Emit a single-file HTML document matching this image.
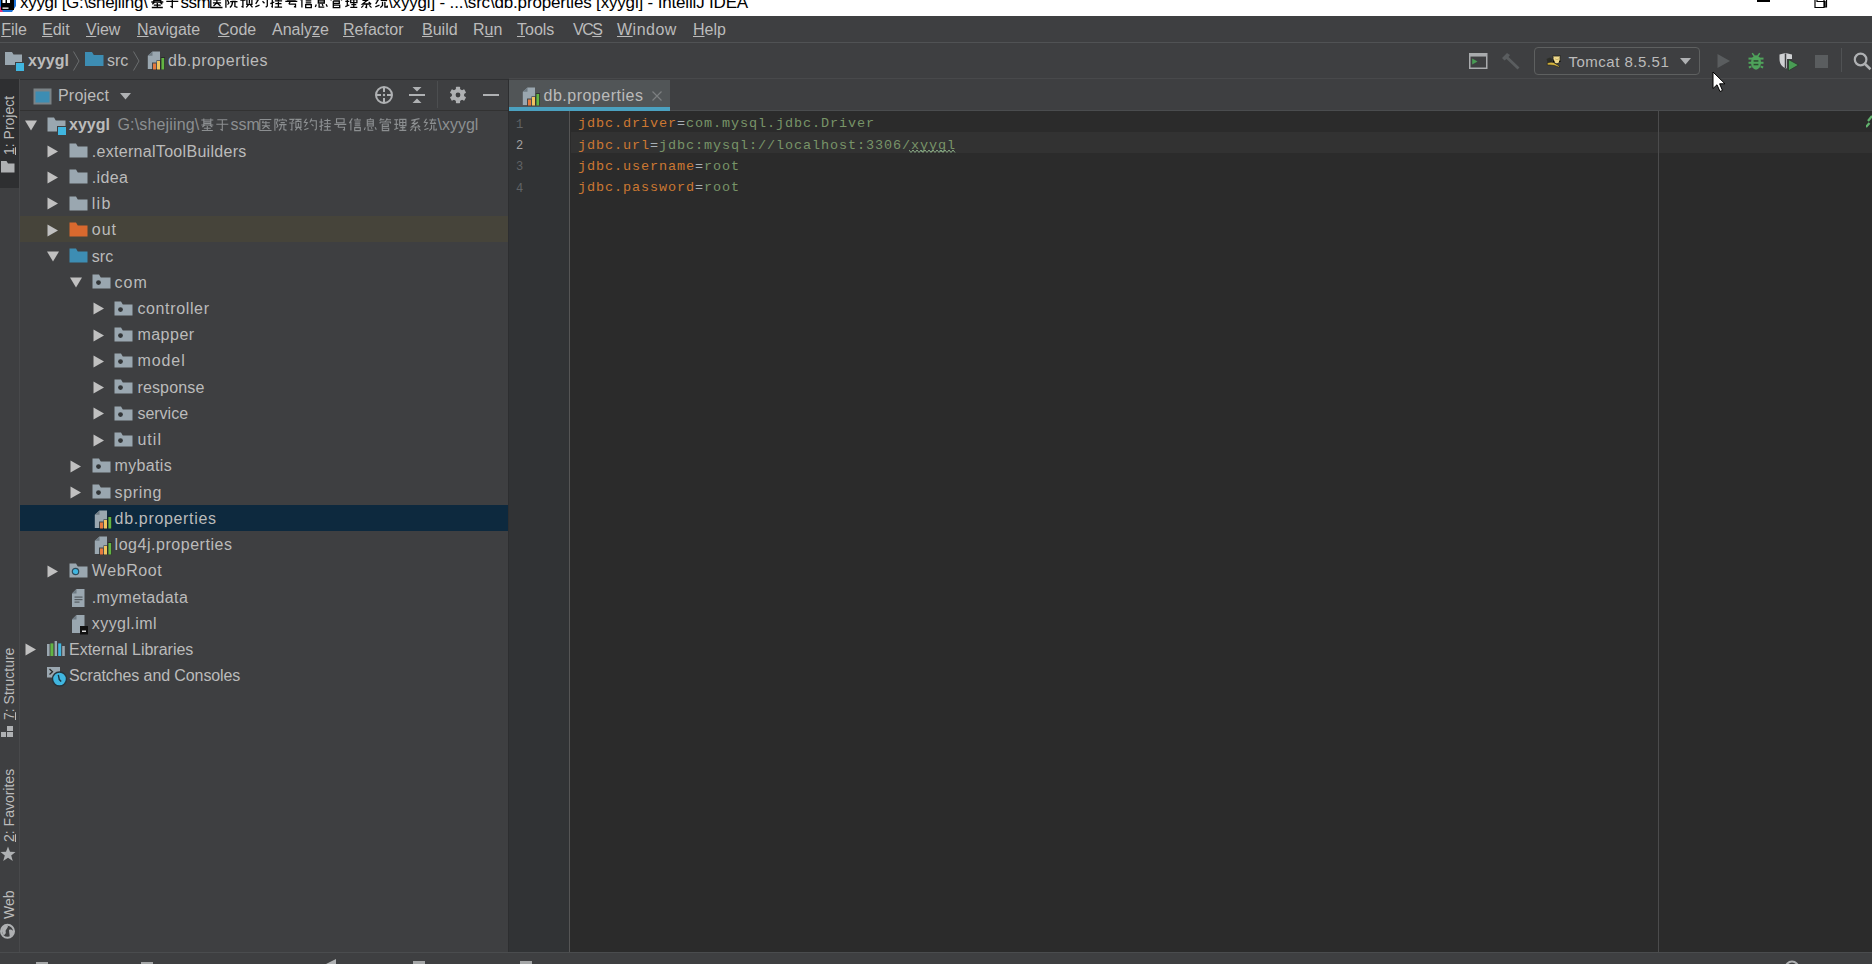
<!DOCTYPE html>
<html><head><meta charset="utf-8">
<style>
*{margin:0;padding:0;box-sizing:border-box}
html,body{width:1872px;height:964px;overflow:hidden;background:#3E3F41;font-family:"Liberation Sans",sans-serif;color:#BBBBBB;position:relative}
.a{position:absolute}
.t{position:absolute;white-space:pre;font-size:16px;line-height:20px}
.cj{display:inline-block;height:16px;vertical-align:-2px;position:relative}
.cj i{position:absolute;left:2px;top:1px;right:2px;bottom:1px;border:1.3px solid;border-left-width:1px;border-right-width:1px}
#title{left:0;top:0;width:1872px;height:16px;background:#fff;overflow:hidden}
#menu{left:0;top:16px;width:1872px;height:27px;background:#3E3F41;border-bottom:1px solid #505254}
#menu .t{top:4px;color:#BBBBBB}
#menu u{text-decoration:underline;text-underline-offset:0.5px;text-decoration-thickness:1px}
#nav{left:0;top:43px;width:1872px;height:36px;background:#3E3F41}
#strip{left:0;top:79px;width:20px;height:873px;background:#3E3F41;border-right:1px solid #48494B}
#panel{left:20px;top:79px;width:488px;height:873px;background:#3E3F41}
#phead{left:0;top:0;width:488px;height:32px;border-bottom:1px solid #323232}
#divider{left:508px;top:79px;width:1px;height:873px;background:#2D2E30}
#tabs{left:509px;top:79px;width:1363px;height:32px;background:#3E3F41;border-bottom:1px solid #4A4C4E}
#tab{left:0;top:1px;width:161px;height:31px;background:#515557}
#tabline{left:0;top:28px;width:161px;height:4px;background:#4BA1C0}
#gutter{left:509px;top:111px;width:61px;height:841px;background:#313335}
#gline{left:569px;top:111px;width:1px;height:841px;background:#555555}
#editor{left:570px;top:111px;width:1302px;height:841px;background:#2B2B2B}
#curline{left:571px;top:132px;width:1301px;height:21px;background:#323232}
#margin{left:1658px;top:111px;width:1px;height:841px;background:#4B4B4C}
#status{left:0;top:952px;width:1872px;height:12px;background:#3E3F41;border-top:1px solid #4A4C4E}
.code{position:absolute;left:578px;white-space:pre;font-family:"Liberation Mono",monospace;font-size:13.5px;letter-spacing:0.9px;line-height:21px}
.k{color:#CC7832}.v{color:#789468}.e{color:#A9B0B6}
.ln{position:absolute;left:516px;width:10px;white-space:pre;font-family:"Liberation Mono",monospace;font-size:12px;line-height:21px;color:#606366}
.vt{position:absolute;white-space:pre;font-size:14px;line-height:16px;transform-origin:0 0;transform:rotate(-90deg);color:#BBBBBB}
.vt u{text-decoration:underline;text-underline-offset:1px;text-decoration-thickness:1px}

</style></head><body>
<div id="title" class="a"><svg class="a" style="left:0;top:0" width="16" height="12" viewBox="0 0 16 12"><path d="M0 0 H16 V6 L12 12 H2 L0 9 Z" fill="#1E73D8"/><path d="M0 6 L3 12 H0Z" fill="#E8317A"/><rect x="1" y="0" width="13" height="10" fill="#000"/><rect x="2.5" y="7.5" width="6" height="1.3" fill="#fff"/><rect x="2.5" y="0" width="3" height="3" fill="#fff"/><rect x="7" y="0" width="3" height="3" fill="#fff"/></svg><span class="t" style="left:20px;top:-7.5px;font-size:17px;color:#000;letter-spacing:-0.3px">xyygl [G:\shejiing\</span><svg class="a" style="left:150px;top:-5px" width="30" height="14" viewBox="0 0 30 14"><path transform="translate(0.3 0)" d="M3.5 0.5V7 M10.5 0.5V7 M1 2H13 M3.5 3.7H10.5 M3.5 5.4H10.5 M1 7H13 M4.5 7L2 9.2 M9.5 7L12 9.2 M7 8V12.5 M3.5 10.2H10.5 M1.5 12.5H12.5" stroke="#000" stroke-width="1.3" fill="none"/><path transform="translate(15.3 0)" d="M2 1.8H12 M1 6.3H13 M7 1.8V12.3L5.2 11.3" stroke="#000" stroke-width="1.3" fill="none"/></svg><span class="t" style="left:180.5px;top:-7.5px;font-size:17px;color:#000;letter-spacing:-0.5px">ssm</span><svg class="a" style="left:209px;top:-5px" width="180" height="14" viewBox="0 0 180 14"><path transform="translate(0.3 0)" d="M1.5 1.5H13 M1.5 1.5V12.5H13.2 M5 2.8L4 5 M4 4.8H11.5 M7.6 3V7.8 M3.6 7.8H11.8 M7.6 7.8L4.2 11 M7.6 7.8L11.2 11" stroke="#000" stroke-width="1.3" fill="none"/><path transform="translate(15.3 0)" d="M1.6 0.8V12.8 M1.6 1.3H4.4L3.2 5L4.6 8.2L3.2 9.6 M9.3 0.4V2 M5.8 2H13 M5.8 2V3.6 M13 2V3.6 M7.3 4.6H11.5 M5.8 6.6H13.2 M8.3 6.6C8.1 9.5 7 11.5 5.6 12.5 M10.6 6.6V11.6L13.2 12.4" stroke="#000" stroke-width="1.3" fill="none"/><path transform="translate(30.3 0)" d="M1 1.4H5.6L3.6 3.8 M1 5H6.2 M3.6 5V12L2.2 11.4 M7 1.4H13.2 M10.2 1.4L9.3 3.4 M7.6 3.4H12.6V9.4H7.6Z M10.1 5V8.6 M9.2 9.6L7 12.4 M11 9.6L13.2 12.4" stroke="#000" stroke-width="1.3" fill="none"/><path transform="translate(45.3 0)" d="M3.2 0.8L1 4.4L4 4.8L1.4 8.8 M1 11.8L5.2 10.2 M8.4 0.6L6.6 4.6 M7.4 2.8H13V11L11.4 12.2 M8.2 6.2L10.2 8.2" stroke="#000" stroke-width="1.3" fill="none"/><path transform="translate(60.3 0)" d="M1 4H5 M3 0.8V12L2 11.5 M1 8.6L5 7 M6 2.5H12.2 M9.1 0.8V5.8 M5.6 5.8H12.8 M6 8.6H12.2 M9.1 6.8V12.2 M5.4 12.2H12.8" stroke="#000" stroke-width="1.3" fill="none"/><path transform="translate(75.3 0)" d="M3.2 0.8H10.8V4.8H3.2Z M1 6.4H13 M5.8 6.4L4.6 9.2 M4.6 9.2H11.2V12L9.6 11.6" stroke="#000" stroke-width="1.3" fill="none"/><path transform="translate(90.3 0)" d="M4 0.4L1 5.2 M2.6 3.4V12.6 M8.6 0.4L9.4 1.4 M5.8 2H12.6 M6.4 4H12 M6.4 5.9H12 M6.4 7.8H12 M6.4 9.6H12V12.6H6.4Z" stroke="#000" stroke-width="1.3" fill="none"/><path transform="translate(105.3 0)" d="M7.4 0.4L6.4 1.8 M4 1.8H10V8H4Z M4 3.8H10 M4 5.9H10 M2 9.4L1 12 M4.8 9V12.2H10 M7.8 9.2L8.8 10.8 M11.8 9.2L13 11.8" stroke="#000" stroke-width="1.3" fill="none"/><path transform="translate(120.3 0)" d="M3 0.4L1.4 2.8 M2.4 1.8H6 M9 0.4L7.6 2.8 M8.4 1.8H12.6 M7 2.8V4 M1.8 4H12.2V5.6 M1.8 4V5.6 M4 6H10V8.4H4 M4 6V12.6H10.4V10.2H4" stroke="#000" stroke-width="1.3" fill="none"/><path transform="translate(135.3 0)" d="M1 1.8H5 M1 6.4H5 M3 1.8V11 M1 11.6L5 10 M6.4 1.4H12.6V7.6H6.4Z M6.4 4.5H12.6 M9.5 1.4V12.2 M7 9.6H12 M6 12.4H13" stroke="#000" stroke-width="1.3" fill="none"/><path transform="translate(150.3 0)" d="M11.2 0.6L3 2.4 M7.2 2.4L4.2 5.4H9 M9.6 4L3.2 9H11.6 M9.4 7L11.8 9.2 M7.2 9V12.6L5.8 12 M4.2 10.4L2 12.6 M10 10.4L12.2 12.6" stroke="#000" stroke-width="1.3" fill="none"/><path transform="translate(165.3 0)" d="M3.2 0.8L1 4.4L4 4.8L1.4 8.8 M1 11.8L5.2 10.2 M9.2 0.4V2 M6 2H13 M9 2L7.2 5.4H12.2 M11 3.8L12.6 6 M8.2 6.8V10.4L6 12.6 M10.6 6.8V12H13V10.4" stroke="#000" stroke-width="1.3" fill="none"/></svg><span class="t" style="left:388px;top:-7.5px;font-size:17px;color:#000;letter-spacing:-0.17px">\xyygl] - ...\src\db.properties [xyygl] - IntelliJ IDEA</span><div class="a" style="left:1757px;top:0;width:13px;height:2px;background:#000"></div><svg class="a" style="left:1814px;top:0" width="14" height="8" viewBox="0 0 14 8"><path d="M3 0 V1.5 H11 V7 H12.5 V0 M1 0 V7.5 H10 V0" stroke="#000" stroke-width="1.2" fill="none"/></svg></div>
<div id="menu" class="a">
<span class="t" style="left:1.2px"><u>F</u>ile</span>
<span class="t" style="left:42px"><u>E</u>dit</span>
<span class="t" style="left:86px"><u>V</u>iew</span>
<span class="t" style="left:137px"><u>N</u>avigate</span>
<span class="t" style="left:218px"><u>C</u>ode</span>
<span class="t" style="left:272px">Analy<u>z</u>e</span>
<span class="t" style="left:343px"><u>R</u>efactor</span>
<span class="t" style="left:422px"><u>B</u>uild</span>
<span class="t" style="left:473px">R<u>u</u>n</span>
<span class="t" style="left:517px"><u>T</u>ools</span>
<span class="t" style="left:573px;letter-spacing:-1.5px">VC<u>S</u></span>
<span class="t" style="left:617px;letter-spacing:0.5px"><u>W</u>indow</span>
<span class="t" style="left:693px"><u>H</u>elp</span>
</div>

<div id="nav" class="a"></div>
<svg class="a" style="left:5px;top:52px" width="20" height="19" viewBox="0 0 20 19"><path d="M0 0 H7 L8.5 2.5 H17 V13 H0 Z" fill="#9AA7B0"/><rect x="10" y="10" width="10" height="9" fill="#3E3F41"/><rect x="11" y="11" width="8" height="8" fill="#40B6E0"/></svg>
<span class="t" style="left:28px;top:51px;font-weight:700">xyygl</span>
<svg class="a" style="left:73px;top:51px" width="7" height="20" viewBox="0 0 7 20"><path d="M0.5 0.5 L6 10 L0.5 19.5" stroke="#6B6E70" stroke-width="1" fill="none"/></svg>
<svg class="a" style="left:85px;top:52px" width="19" height="14" viewBox="0 0 19 14"><path d="M0 0 H7 L8.8 3 H18.5 V14 H0 Z" fill="#3D8DB3"/></svg>
<span class="t" style="left:107px;top:51px">src</span>
<svg class="a" style="left:133px;top:51px" width="7" height="20" viewBox="0 0 7 20"><path d="M0.5 0.5 L6 10 L0.5 19.5" stroke="#6B6E70" stroke-width="1" fill="none"/></svg>
<svg class="a" style="left:147px;top:51px" width="18" height="19" viewBox="0 0 18 19"><path d="M5.5 0.5 H13 V18 H0.8 V4.8 Z" fill="#9AA7B0"/><path d="M0.8 4.8 L5.5 0.5 V4.8 Z" fill="#6E7A82"/><rect x="5" y="11.5" width="4.6" height="7" fill="#1E1E1E" opacity="0.7"/><rect x="6" y="12.5" width="3" height="6" fill="#E5793E"/><rect x="9.5" y="9.3" width="4.2" height="9.2" fill="#1E1E1E" opacity="0.7"/><rect x="10" y="10" width="3" height="8.5" fill="#F1C35F"/><rect x="13.8" y="6.2" width="4.2" height="12.3" fill="#1E1E1E" opacity="0.7"/><rect x="14.4" y="7" width="2.8" height="11.5" fill="#62B543"/></svg>
<span class="t" style="left:168px;top:51px;letter-spacing:0.5px">db.properties</span>
<!-- toolbar right -->
<svg class="a" style="left:1469px;top:53px" width="19" height="16" viewBox="0 0 19 16"><rect x="0.75" y="0.75" width="17" height="14.5" fill="none" stroke="#A9ABAD" stroke-width="1.5"/><rect x="0.75" y="0.75" width="17" height="2.8" fill="#A9ABAD"/><path d="M3.2 5.5 L8.5 8.5 L3.2 11.5 Z" fill="#499C54"/></svg>
<svg class="a" style="left:1501px;top:52px" width="20" height="18" viewBox="0 0 20 18"><path d="M1 6 L6 1 L9 3 L7.5 5 L18.5 15.5 L16.5 17.5 L5.5 7 L3.5 8.5 Z" fill="#5A5D5F"/></svg>
<div class="a" style="left:1534px;top:47px;width:166px;height:28px;border:1.5px solid #5E6060;border-radius:4px"></div>
<svg class="a" style="left:1545px;top:54px" width="17" height="14" viewBox="0 0 17 14"><path d="M1.5 5 L5 3.5 L8 5.5 L6 9 L3 10 Z" fill="#2A2B24" opacity="0.85"/><path d="M2 9.5 C4 8 6 8 8.5 8.5 L12 10.5 L15 12.8 L13.5 13 L9.5 11.5 L5 11 L2.5 11 Z" fill="#D6B43C" stroke="#1E1E18" stroke-width="0.6"/><path d="M8.2 1.2 L9.2 2 L14 2 L15 1.2 L15.2 6.5 L13.5 9.5 L11 9.8 L8.8 8 L8 4.5 Z" fill="#EFD98C" stroke="#1E1E18" stroke-width="0.8"/><circle cx="8.7" cy="7.3" r="0.9" fill="#000"/><circle cx="14.8" cy="7.3" r="0.8" fill="#000"/><path d="M10.5 5 L11.5 5.5 M12.5 5.5 L13.5 5" stroke="#8A7A3A" stroke-width="0.7"/></svg>
<span class="t" style="left:1568.5px;top:52px;font-size:15px;letter-spacing:0.5px">Tomcat 8.5.51</span>
<svg class="a" style="left:1680px;top:58px" width="12" height="7" viewBox="0 0 12 7"><path d="M0 0 H11 L5.5 6.5 Z" fill="#AFB1B3"/></svg>
<svg class="a" style="left:1717px;top:54px" width="14" height="14" viewBox="0 0 14 14"><path d="M0.5 0 L13 7 L0.5 14 Z" fill="#5A5D5F"/></svg>
<svg class="a" style="left:1748px;top:52px" width="16" height="19" viewBox="0 0 16 19"><g fill="#4FA35B"><ellipse cx="8" cy="10.5" rx="5" ry="7.2"/><rect x="0.5" y="5.6" width="15" height="2"/><rect x="0.5" y="9.8" width="15" height="2"/><path d="M0.5 14.5 L3.5 13.5 L3.5 15.5 L1.2 16.4 Z M15.5 14.5 L12.5 13.5 L12.5 15.5 L14.8 16.4 Z"/><path d="M3.6 1.6 L4.8 0.8 L7 3.6 L5.6 4.4 Z M12.4 1.6 L11.2 0.8 L9 3.6 L10.4 4.4 Z"/></g><rect x="5.6" y="8.2" width="4.8" height="1.5" fill="#2C4A30"/><rect x="5.6" y="11.8" width="4.8" height="1.5" fill="#2C4A30"/></svg>
<svg class="a" style="left:1779px;top:53px" width="20" height="18" viewBox="0 0 20 18"><path d="M0.5 1.5 L6.5 0 L13 1.5 V6 L8 6 V15 L7 15.5 C3 13.5 0.5 11 0.5 6 Z" fill="#CFD1D3"/><path d="M6.5 0.5 V15" stroke="#3E3F41" stroke-width="1.5"/><path d="M9.5 6.5 L19.5 12 L9.5 17.8 Z" fill="#499C54" stroke="#2B3A2D" stroke-width="0.8"/></svg>
<div class="a" style="left:1815px;top:55px;width:12.5px;height:12.5px;background:#5A5D5F"></div>
<div class="a" style="left:1841px;top:48px;width:1px;height:24px;background:#505254"></div>
<svg class="a" style="left:1852px;top:51px" width="20" height="20" viewBox="0 0 20 20"><circle cx="8.6" cy="8.5" r="5.8" stroke="#AFB1B3" stroke-width="2.2" fill="none"/><path d="M12.8 12.8 L18.5 18.2" stroke="#AFB1B3" stroke-width="2.6"/></svg>

<div id="strip" class="a"></div>
<div class="a" style="left:0;top:79px;width:19px;height:109px;background:#2E2F31"></div>
<span class="vt" style="left:1px;top:155px"><u>1</u>: Project</span>
<svg class="a" style="left:1px;top:161px" width="14" height="12" viewBox="0 0 14 12"><path d="M0 0 H5.5 L7 2.5 H13.5 V11.5 H0 Z" fill="#AFB1B3"/></svg>
<span class="vt" style="left:1px;top:720px"><u>7</u>: Structure</span>
<svg class="a" style="left:1px;top:726px" width="13" height="12" viewBox="0 0 13 12"><rect x="6" y="0" width="6" height="5" fill="#AFB1B3"/><rect x="0" y="6" width="5" height="5" fill="#AFB1B3"/><rect x="6" y="6" width="6" height="5" fill="#AFB1B3"/></svg>
<span class="vt" style="left:1px;top:842px"><u>2</u>: Favorites</span>
<svg class="a" style="left:0px;top:846px" width="16" height="16" viewBox="0 0 16 16"><path d="M8 0.5 L10 5.8 L15.5 6 L11.2 9.5 L12.8 15 L8 11.8 L3.2 15 L4.8 9.5 L0.5 6 L6 5.8 Z" fill="#AFB1B3"/></svg>
<span class="vt" style="left:0.5px;top:919px">Web</span>
<svg class="a" style="left:0px;top:923px" width="16" height="17" viewBox="0 0 16 17"><circle cx="7.5" cy="8.3" r="6.5" stroke="#AFB1B3" stroke-width="2" fill="none"/><path d="M2.5 5 C4 3 6 2.5 8 3 C8 5 6 6 5.5 8 C6.5 10 5 12 3.5 12 C2 10 1.5 7 2.5 5 Z M9 7 C11 6 13 7 13.5 9 C13 12 11 13.5 9.5 14 C10 12 9 10 9 7 Z" fill="#AFB1B3"/></svg>

<div id="panel" class="a"><div id="phead" class="a"></div></div>
<svg class="a" style="left:33px;top:88px" width="19" height="17" viewBox="0 0 19 17"><rect x="0.5" y="0.5" width="18" height="16" fill="#7B8387"/><rect x="2.5" y="3.5" width="14" height="11" fill="#3D8DB3"/></svg>
<span class="t" style="left:58px;top:86px;font-size:16px;letter-spacing:0.2px">Project</span>
<svg class="a" style="left:120px;top:93px" width="12" height="7" viewBox="0 0 12 7"><path d="M0 0 H11 L5.5 6.5 Z" fill="#AFB1B3"/></svg>
<svg class="a" style="left:374px;top:85px" width="20" height="20" viewBox="0 0 20 20"><circle cx="10" cy="10" r="8" stroke="#AFB1B3" stroke-width="2" fill="none"/><path d="M10 2 V7 M10 13 V18 M2 10 H7 M13 10 H18" stroke="#AFB1B3" stroke-width="2"/><circle cx="10" cy="10" r="1.2" fill="#AFB1B3"/></svg>
<svg class="a" style="left:409px;top:86px" width="16" height="18" viewBox="0 0 16 18"><path d="M3.5 1 H12.5 L8 5.5 Z M3.5 17 H12.5 L8 12.5 Z" fill="#AFB1B3"/><rect x="0" y="8" width="16" height="2" fill="#AFB1B3"/></svg>
<div class="a" style="left:437px;top:81px;width:1px;height:27px;background:#4C4E50"></div>
<svg class="a" style="left:449px;top:86px" width="18" height="18" viewBox="0 0 18 18"><circle cx="9" cy="9" r="6.2" fill="#AFB1B3"/><g fill="#AFB1B3"><rect x="6.9" y="0.8" width="4.2" height="4.5" rx="0.6" transform="rotate(0 9 9)"/><rect x="6.9" y="0.8" width="4.2" height="4.5" rx="0.6" transform="rotate(60 9 9)"/><rect x="6.9" y="0.8" width="4.2" height="4.5" rx="0.6" transform="rotate(120 9 9)"/><rect x="6.9" y="0.8" width="4.2" height="4.5" rx="0.6" transform="rotate(180 9 9)"/><rect x="6.9" y="0.8" width="4.2" height="4.5" rx="0.6" transform="rotate(240 9 9)"/><rect x="6.9" y="0.8" width="4.2" height="4.5" rx="0.6" transform="rotate(300 9 9)"/></g><circle cx="9" cy="9" r="2.4" fill="#3E3F41"/></svg>
<div class="a" style="left:483px;top:94px;width:16px;height:2px;background:#AFB1B3"></div>

<svg class="a" style="left:24.5px;top:119.5px" width="12" height="11" viewBox="0 0 12 11"><path d="M0 0.5 H12 L6 10.5 Z" fill="#C0C0C0"/></svg>
<svg class="a" style="left:47.0px;top:116.9px" width="19" height="15" viewBox="0 0 19 15"><path d="M0.5 0.5 H7 L8.8 3.5 H18.5 V14.5 H0.5 Z" fill="#9AA7B0"/></svg><div class="a" style="left:56.8px;top:126.4px;width:10.2px;height:10px;background:#3E3F41"></div><div class="a" style="left:57.8px;top:127.4px;width:8.3px;height:8px;background:#40B6E0"></div>
<span class="t" style="left:69.0px;top:115.30px;font-weight:700;letter-spacing:0px">xyygl</span>
<span class="t" style="left:117.5px;top:115.30px;color:#8C8F91;letter-spacing:0.15px">G:\shejiing\</span>
<svg class="a" style="left:200px;top:118.30px" width="30" height="14" viewBox="0 0 30 14"><path transform="translate(0.3 0)" d="M3.5 0.5V7 M10.5 0.5V7 M1 2H13 M3.5 3.7H10.5 M3.5 5.4H10.5 M1 7H13 M4.5 7L2 9.2 M9.5 7L12 9.2 M7 8V12.5 M3.5 10.2H10.5 M1.5 12.5H12.5" stroke="#8C8F91" stroke-width="1.1" fill="none"/><path transform="translate(15.3 0)" d="M2 1.8H12 M1 6.3H13 M7 1.8V12.3L5.2 11.3" stroke="#8C8F91" stroke-width="1.1" fill="none"/></svg>
<span class="t" style="left:230.5px;top:115.30px;color:#8C8F91">ssm</span>
<svg class="a" style="left:258px;top:118.30px" width="180" height="14" viewBox="0 0 180 14"><path transform="translate(0.3 0)" d="M1.5 1.5H13 M1.5 1.5V12.5H13.2 M5 2.8L4 5 M4 4.8H11.5 M7.6 3V7.8 M3.6 7.8H11.8 M7.6 7.8L4.2 11 M7.6 7.8L11.2 11" stroke="#8C8F91" stroke-width="1.1" fill="none"/><path transform="translate(15.3 0)" d="M1.6 0.8V12.8 M1.6 1.3H4.4L3.2 5L4.6 8.2L3.2 9.6 M9.3 0.4V2 M5.8 2H13 M5.8 2V3.6 M13 2V3.6 M7.3 4.6H11.5 M5.8 6.6H13.2 M8.3 6.6C8.1 9.5 7 11.5 5.6 12.5 M10.6 6.6V11.6L13.2 12.4" stroke="#8C8F91" stroke-width="1.1" fill="none"/><path transform="translate(30.3 0)" d="M1 1.4H5.6L3.6 3.8 M1 5H6.2 M3.6 5V12L2.2 11.4 M7 1.4H13.2 M10.2 1.4L9.3 3.4 M7.6 3.4H12.6V9.4H7.6Z M10.1 5V8.6 M9.2 9.6L7 12.4 M11 9.6L13.2 12.4" stroke="#8C8F91" stroke-width="1.1" fill="none"/><path transform="translate(45.3 0)" d="M3.2 0.8L1 4.4L4 4.8L1.4 8.8 M1 11.8L5.2 10.2 M8.4 0.6L6.6 4.6 M7.4 2.8H13V11L11.4 12.2 M8.2 6.2L10.2 8.2" stroke="#8C8F91" stroke-width="1.1" fill="none"/><path transform="translate(60.3 0)" d="M1 4H5 M3 0.8V12L2 11.5 M1 8.6L5 7 M6 2.5H12.2 M9.1 0.8V5.8 M5.6 5.8H12.8 M6 8.6H12.2 M9.1 6.8V12.2 M5.4 12.2H12.8" stroke="#8C8F91" stroke-width="1.1" fill="none"/><path transform="translate(75.3 0)" d="M3.2 0.8H10.8V4.8H3.2Z M1 6.4H13 M5.8 6.4L4.6 9.2 M4.6 9.2H11.2V12L9.6 11.6" stroke="#8C8F91" stroke-width="1.1" fill="none"/><path transform="translate(90.3 0)" d="M4 0.4L1 5.2 M2.6 3.4V12.6 M8.6 0.4L9.4 1.4 M5.8 2H12.6 M6.4 4H12 M6.4 5.9H12 M6.4 7.8H12 M6.4 9.6H12V12.6H6.4Z" stroke="#8C8F91" stroke-width="1.1" fill="none"/><path transform="translate(105.3 0)" d="M7.4 0.4L6.4 1.8 M4 1.8H10V8H4Z M4 3.8H10 M4 5.9H10 M2 9.4L1 12 M4.8 9V12.2H10 M7.8 9.2L8.8 10.8 M11.8 9.2L13 11.8" stroke="#8C8F91" stroke-width="1.1" fill="none"/><path transform="translate(120.3 0)" d="M3 0.4L1.4 2.8 M2.4 1.8H6 M9 0.4L7.6 2.8 M8.4 1.8H12.6 M7 2.8V4 M1.8 4H12.2V5.6 M1.8 4V5.6 M4 6H10V8.4H4 M4 6V12.6H10.4V10.2H4" stroke="#8C8F91" stroke-width="1.1" fill="none"/><path transform="translate(135.3 0)" d="M1 1.8H5 M1 6.4H5 M3 1.8V11 M1 11.6L5 10 M6.4 1.4H12.6V7.6H6.4Z M6.4 4.5H12.6 M9.5 1.4V12.2 M7 9.6H12 M6 12.4H13" stroke="#8C8F91" stroke-width="1.1" fill="none"/><path transform="translate(150.3 0)" d="M11.2 0.6L3 2.4 M7.2 2.4L4.2 5.4H9 M9.6 4L3.2 9H11.6 M9.4 7L11.8 9.2 M7.2 9V12.6L5.8 12 M4.2 10.4L2 12.6 M10 10.4L12.2 12.6" stroke="#8C8F91" stroke-width="1.1" fill="none"/><path transform="translate(165.3 0)" d="M3.2 0.8L1 4.4L4 4.8L1.4 8.8 M1 11.8L5.2 10.2 M9.2 0.4V2 M6 2H13 M9 2L7.2 5.4H12.2 M11 3.8L12.6 6 M8.2 6.8V10.4L6 12.6 M10.6 6.8V12H13V10.4" stroke="#8C8F91" stroke-width="1.1" fill="none"/></svg>
<span class="t" style="left:437.5px;top:115.30px;color:#8C8F91">\xyygl</span>
<svg class="a" style="left:47.3px;top:144.8px" width="12" height="13" viewBox="0 0 12 13"><path d="M0.5 0.5 L11 6.5 L0.5 12.5 Z" fill="#C0C0C0"/></svg>
<svg class="a" style="left:69.3px;top:143.1px" width="19" height="15" viewBox="0 0 19 15"><path d="M0.5 0.5 H7 L8.8 3.5 H18.5 V14.5 H0.5 Z" fill="#9AA7B0"/></svg>
<span class="t" style="left:91.8px;top:141.54px;font-weight:400;letter-spacing:0.3px">.externalToolBuilders</span>
<svg class="a" style="left:47.3px;top:171.1px" width="12" height="13" viewBox="0 0 12 13"><path d="M0.5 0.5 L11 6.5 L0.5 12.5 Z" fill="#C0C0C0"/></svg>
<svg class="a" style="left:69.3px;top:169.4px" width="19" height="15" viewBox="0 0 19 15"><path d="M0.5 0.5 H7 L8.8 3.5 H18.5 V14.5 H0.5 Z" fill="#9AA7B0"/></svg>
<span class="t" style="left:91.8px;top:167.78px;font-weight:400;letter-spacing:0.38px">.idea</span>
<svg class="a" style="left:47.3px;top:197.3px" width="12" height="13" viewBox="0 0 12 13"><path d="M0.5 0.5 L11 6.5 L0.5 12.5 Z" fill="#C0C0C0"/></svg>
<svg class="a" style="left:69.3px;top:195.6px" width="19" height="15" viewBox="0 0 19 15"><path d="M0.5 0.5 H7 L8.8 3.5 H18.5 V14.5 H0.5 Z" fill="#9AA7B0"/></svg>
<span class="t" style="left:91.8px;top:194.02px;font-weight:400;letter-spacing:1.25px">lib</span>
<div class="a" style="left:20px;top:215.96px;width:488px;height:26.24px;background:#46443A"></div>
<svg class="a" style="left:47.3px;top:223.6px" width="12" height="13" viewBox="0 0 12 13"><path d="M0.5 0.5 L11 6.5 L0.5 12.5 Z" fill="#C0C0C0"/></svg>
<svg class="a" style="left:69.3px;top:221.9px" width="19" height="15" viewBox="0 0 19 15"><path d="M0.5 0.5 H7 L8.8 3.5 H18.5 V14.5 H0.5 Z" fill="#D9692E"/></svg>
<span class="t" style="left:91.8px;top:220.26px;font-weight:400;letter-spacing:1.0px">out</span>
<svg class="a" style="left:47.3px;top:250.7px" width="12" height="11" viewBox="0 0 12 11"><path d="M0 0.5 H12 L6 10.5 Z" fill="#C0C0C0"/></svg>
<svg class="a" style="left:69.3px;top:248.1px" width="19" height="15" viewBox="0 0 19 15"><path d="M0.5 0.5 H7 L8.8 3.5 H18.5 V14.5 H0.5 Z" fill="#3D8DB3"/></svg>
<span class="t" style="left:91.8px;top:246.50px;font-weight:400;letter-spacing:0.0px">src</span>
<svg class="a" style="left:70.1px;top:276.9px" width="12" height="11" viewBox="0 0 12 11"><path d="M0 0.5 H12 L6 10.5 Z" fill="#C0C0C0"/></svg>
<svg class="a" style="left:91.7px;top:274.3px" width="19" height="15" viewBox="0 0 19 15"><path d="M0.5 0.5 H7 L8.8 3.5 H18.5 V14.5 H0.5 Z" fill="#9AA7B0"/><circle cx="6.5" cy="8.6" r="2.4" fill="#323537"/></svg>
<span class="t" style="left:114.6px;top:272.74px;font-weight:400;letter-spacing:1.0px">com</span>
<svg class="a" style="left:92.9px;top:302.3px" width="12" height="13" viewBox="0 0 12 13"><path d="M0.5 0.5 L11 6.5 L0.5 12.5 Z" fill="#C0C0C0"/></svg>
<svg class="a" style="left:114.1px;top:300.6px" width="19" height="15" viewBox="0 0 19 15"><path d="M0.5 0.5 H7 L8.8 3.5 H18.5 V14.5 H0.5 Z" fill="#9AA7B0"/><circle cx="6.5" cy="8.6" r="2.4" fill="#323537"/></svg>
<span class="t" style="left:137.4px;top:298.98px;font-weight:400;letter-spacing:0.64px">controller</span>
<svg class="a" style="left:92.9px;top:328.5px" width="12" height="13" viewBox="0 0 12 13"><path d="M0.5 0.5 L11 6.5 L0.5 12.5 Z" fill="#C0C0C0"/></svg>
<svg class="a" style="left:114.1px;top:326.8px" width="19" height="15" viewBox="0 0 19 15"><path d="M0.5 0.5 H7 L8.8 3.5 H18.5 V14.5 H0.5 Z" fill="#9AA7B0"/><circle cx="6.5" cy="8.6" r="2.4" fill="#323537"/></svg>
<span class="t" style="left:137.4px;top:325.22px;font-weight:400;letter-spacing:0.5px">mapper</span>
<svg class="a" style="left:92.9px;top:354.8px" width="12" height="13" viewBox="0 0 12 13"><path d="M0.5 0.5 L11 6.5 L0.5 12.5 Z" fill="#C0C0C0"/></svg>
<svg class="a" style="left:114.1px;top:353.1px" width="19" height="15" viewBox="0 0 19 15"><path d="M0.5 0.5 H7 L8.8 3.5 H18.5 V14.5 H0.5 Z" fill="#9AA7B0"/><circle cx="6.5" cy="8.6" r="2.4" fill="#323537"/></svg>
<span class="t" style="left:137.4px;top:351.46px;font-weight:400;letter-spacing:0.95px">model</span>
<svg class="a" style="left:92.9px;top:381.0px" width="12" height="13" viewBox="0 0 12 13"><path d="M0.5 0.5 L11 6.5 L0.5 12.5 Z" fill="#C0C0C0"/></svg>
<svg class="a" style="left:114.1px;top:379.3px" width="19" height="15" viewBox="0 0 19 15"><path d="M0.5 0.5 H7 L8.8 3.5 H18.5 V14.5 H0.5 Z" fill="#9AA7B0"/><circle cx="6.5" cy="8.6" r="2.4" fill="#323537"/></svg>
<span class="t" style="left:137.4px;top:377.70px;font-weight:400;letter-spacing:0.16px">response</span>
<svg class="a" style="left:92.9px;top:407.2px" width="12" height="13" viewBox="0 0 12 13"><path d="M0.5 0.5 L11 6.5 L0.5 12.5 Z" fill="#C0C0C0"/></svg>
<svg class="a" style="left:114.1px;top:405.5px" width="19" height="15" viewBox="0 0 19 15"><path d="M0.5 0.5 H7 L8.8 3.5 H18.5 V14.5 H0.5 Z" fill="#9AA7B0"/><circle cx="6.5" cy="8.6" r="2.4" fill="#323537"/></svg>
<span class="t" style="left:137.4px;top:403.94px;font-weight:400;letter-spacing:0.0px">service</span>
<svg class="a" style="left:92.9px;top:433.5px" width="12" height="13" viewBox="0 0 12 13"><path d="M0.5 0.5 L11 6.5 L0.5 12.5 Z" fill="#C0C0C0"/></svg>
<svg class="a" style="left:114.1px;top:431.8px" width="19" height="15" viewBox="0 0 19 15"><path d="M0.5 0.5 H7 L8.8 3.5 H18.5 V14.5 H0.5 Z" fill="#9AA7B0"/><circle cx="6.5" cy="8.6" r="2.4" fill="#323537"/></svg>
<span class="t" style="left:137.4px;top:430.18px;font-weight:400;letter-spacing:1.07px">util</span>
<svg class="a" style="left:70.1px;top:459.7px" width="12" height="13" viewBox="0 0 12 13"><path d="M0.5 0.5 L11 6.5 L0.5 12.5 Z" fill="#C0C0C0"/></svg>
<svg class="a" style="left:91.7px;top:458.0px" width="19" height="15" viewBox="0 0 19 15"><path d="M0.5 0.5 H7 L8.8 3.5 H18.5 V14.5 H0.5 Z" fill="#9AA7B0"/><circle cx="6.5" cy="8.6" r="2.4" fill="#323537"/></svg>
<span class="t" style="left:114.6px;top:456.42px;font-weight:400;letter-spacing:0.32px">mybatis</span>
<svg class="a" style="left:70.1px;top:486.0px" width="12" height="13" viewBox="0 0 12 13"><path d="M0.5 0.5 L11 6.5 L0.5 12.5 Z" fill="#C0C0C0"/></svg>
<svg class="a" style="left:91.7px;top:484.3px" width="19" height="15" viewBox="0 0 19 15"><path d="M0.5 0.5 H7 L8.8 3.5 H18.5 V14.5 H0.5 Z" fill="#9AA7B0"/><circle cx="6.5" cy="8.6" r="2.4" fill="#323537"/></svg>
<span class="t" style="left:114.6px;top:482.66px;font-weight:400;letter-spacing:0.66px">spring</span>
<div class="a" style="left:20px;top:504.60px;width:488px;height:26.24px;background:#0D293E"></div>
<svg class="a" style="left:94.4px;top:510.1px" width="18" height="19" viewBox="0 0 18 19"><path d="M5.5 0.5 H13 V18 H0.8 V4.8 Z" fill="#9AA7B0"/><path d="M0.8 4.8 L5.5 0.5 V4.8 Z" fill="#6E7A82"/><rect x="5" y="11.5" width="4.6" height="7" fill="#1E1E1E" opacity="0.7"/><rect x="6" y="12.5" width="3" height="6" fill="#E5793E"/><rect x="9.5" y="9.3" width="4.2" height="9.2" fill="#1E1E1E" opacity="0.7"/><rect x="10" y="10" width="3" height="8.5" fill="#F1C35F"/><rect x="13.8" y="6.2" width="4.2" height="12.3" fill="#1E1E1E" opacity="0.7"/><rect x="14.4" y="7" width="2.8" height="11.5" fill="#62B543"/></svg>
<span class="t" style="left:114.6px;top:508.90px;font-weight:400;letter-spacing:0.67px">db.properties</span>
<svg class="a" style="left:94.4px;top:536.3px" width="18" height="19" viewBox="0 0 18 19"><path d="M5.5 0.5 H13 V18 H0.8 V4.8 Z" fill="#9AA7B0"/><path d="M0.8 4.8 L5.5 0.5 V4.8 Z" fill="#6E7A82"/><rect x="5" y="11.5" width="4.6" height="7" fill="#1E1E1E" opacity="0.7"/><rect x="6" y="12.5" width="3" height="6" fill="#E5793E"/><rect x="9.5" y="9.3" width="4.2" height="9.2" fill="#1E1E1E" opacity="0.7"/><rect x="10" y="10" width="3" height="8.5" fill="#F1C35F"/><rect x="13.8" y="6.2" width="4.2" height="12.3" fill="#1E1E1E" opacity="0.7"/><rect x="14.4" y="7" width="2.8" height="11.5" fill="#62B543"/></svg>
<span class="t" style="left:114.6px;top:535.14px;font-weight:400;letter-spacing:0.53px">log4j.properties</span>
<svg class="a" style="left:47.3px;top:564.7px" width="12" height="13" viewBox="0 0 12 13"><path d="M0.5 0.5 L11 6.5 L0.5 12.5 Z" fill="#C0C0C0"/></svg>
<svg class="a" style="left:69.3px;top:563.0px" width="19" height="15" viewBox="0 0 19 15"><path d="M0.5 0.5 H7 L8.8 3.5 H18.5 V14.5 H0.5 Z" fill="#9AA7B0"/><circle cx="6.5" cy="8.5" r="3.2" fill="#40B6E0" stroke="#2D4A5A" stroke-width="1.2"/></svg>
<span class="t" style="left:91.8px;top:561.38px;font-weight:400;letter-spacing:0.58px">WebRoot</span>
<svg class="a" style="left:72.3px;top:588.8px" width="13" height="19" viewBox="0 0 13 19"><path d="M4.5 0 H12.5 V18 H0 V4.5 Z" fill="#9AA7B0"/><path d="M0 4.5 L4.5 0 V4.5 Z" fill="#6E7A82"/><rect x="2.5" y="7.5" width="8" height="1.2" fill="#555C61"/><rect x="2.5" y="10" width="8" height="1.2" fill="#555C61"/><rect x="2.5" y="12.5" width="5" height="1.2" fill="#555C61"/></svg>
<span class="t" style="left:91.8px;top:587.62px;font-weight:400;letter-spacing:0.35px">.mymetadata</span>
<svg class="a" style="left:72.3px;top:615.1px" width="17" height="20" viewBox="0 0 17 20"><path d="M4.5 0 H12.5 V18 H0 V4.5 Z" fill="#9AA7B0"/><path d="M0 4.5 L4.5 0 V4.5 Z" fill="#6E7A82"/><rect x="8" y="11" width="8" height="8.5" fill="#111"/><rect x="10" y="15.5" width="4" height="1.5" fill="#ddd"/></svg>
<span class="t" style="left:91.8px;top:613.86px;font-weight:400;letter-spacing:0.42px">xyygl.iml</span>
<svg class="a" style="left:24.5px;top:643.4px" width="12" height="13" viewBox="0 0 12 13"><path d="M0.5 0.5 L11 6.5 L0.5 12.5 Z" fill="#C0C0C0"/></svg>
<svg class="a" style="left:47.0px;top:641.3px" width="19" height="16" viewBox="0 0 19 16"><rect x="0" y="3" width="2.6" height="12" fill="#9AA7B0"/><rect x="3.4" y="2.4" width="3" height="12.6" fill="#62B543"/><rect x="7.6" y="0" width="2.4" height="15" fill="#9AA7B0"/><rect x="11.2" y="2.4" width="3" height="12.6" fill="#40B6E0"/><rect x="15.2" y="5" width="2.6" height="10" fill="#9AA7B0"/></svg>
<span class="t" style="left:69.0px;top:640.10px;font-weight:400;letter-spacing:-0.01px">External Libraries</span>
<svg class="a" style="left:47.0px;top:666.8px" width="22" height="20" viewBox="0 0 22 20"><rect x="0" y="0" width="13" height="10.5" fill="#9AA7B0"/><path d="M2.5 2 L5.5 4.8 L2.5 7.5" stroke="#2B2B2B" stroke-width="1.3" fill="none"/><circle cx="12.5" cy="12" r="7" fill="#40B6E0" stroke="#26343C" stroke-width="1.4"/><path d="M11.3 7.8 L12.3 12.6 L14.2 14.6" stroke="#1B3644" stroke-width="1.4" fill="none"/></svg>
<span class="t" style="left:69.0px;top:666.34px;font-weight:400;letter-spacing:-0.1px">Scratches and Consoles</span>
<div id="divider" class="a"></div>
<div class="a" style="left:509px;top:78px;width:1363px;height:1px;background:#48494B"></div>
<div class="a" style="left:20px;top:79px;width:488px;height:1px;background:#2F3032"></div>
<div id="tabs" class="a"><div id="tab" class="a"></div><div id="tabline" class="a"></div></div>
<svg class="a" style="left:522px;top:87px" width="18" height="19" viewBox="0 0 18 19"><path d="M5.5 0.5 H13 V18 H0.8 V4.8 Z" fill="#9AA7B0"/><path d="M0.8 4.8 L5.5 0.5 V4.8 Z" fill="#6E7A82"/><rect x="5" y="11.5" width="4.6" height="7" fill="#1E1E1E" opacity="0.7"/><rect x="6" y="12.5" width="3" height="6" fill="#E5793E"/><rect x="9.5" y="9.3" width="4.2" height="9.2" fill="#1E1E1E" opacity="0.7"/><rect x="10" y="10" width="3" height="8.5" fill="#F1C35F"/><rect x="13.8" y="6.2" width="4.2" height="12.3" fill="#1E1E1E" opacity="0.7"/><rect x="14.4" y="7" width="2.8" height="11.5" fill="#62B543"/></svg>
<span class="t" style="left:543.5px;top:86px;letter-spacing:0.5px">db.properties</span>
<svg class="a" style="left:652px;top:91px" width="10" height="10" viewBox="0 0 10 10"><path d="M0.5 0.5 L9.5 9.5 M9.5 0.5 L0.5 9.5" stroke="#7C7F81" stroke-width="1.2"/></svg>
<div id="gutter" class="a"></div>
<div id="editor" class="a"></div>
<div id="curline" class="a"></div>
<div id="gline" class="a"></div>
<div id="margin" class="a"></div>
<span class="ln" style="top:114.5px">1</span>
<span class="ln" style="top:136px;color:#A4A3A3">2</span>
<span class="ln" style="top:157px">3</span>
<span class="ln" style="top:178.5px">4</span>
<span class="code" style="top:113.4px"><span class="k">jdbc.driver</span><span class="e">=</span><span class="v">com.mysql.jdbc.Driver</span></span>
<span class="code" style="top:135px"><span class="k">jdbc.url</span><span class="e">=</span><span class="v">jdbc:mysql://localhost:3306/xyygl</span></span>
<span class="code" style="top:155.9px"><span class="k">jdbc.username</span><span class="e">=</span><span class="v">root</span></span>
<span class="code" style="top:177.3px"><span class="k">jdbc.password</span><span class="e">=</span><span class="v">root</span></span>
<div id="status" class="a"></div>
<svg class="a" style="left:909px;top:149px" width="47" height="5" viewBox="0 0 47 5"><path d="M0 1 L2 3.5 L4 1 L6 3.5 L8 1 L10 3.5 L12 1 L14 3.5 L16 1 L18 3.5 L20 1 L22 3.5 L24 1 L26 3.5 L28 1 L30 3.5 L32 1 L34 3.5 L36 1 L38 3.5 L40 1 L42 3.5 L44 1 L46 3.5" stroke="#8AAA86" stroke-width="1" fill="none"/></svg>
<svg class="a" style="left:1866px;top:115px" width="6" height="14" viewBox="0 0 6 14"><path d="M0 12 L3.5 8 M2 6 L6 1" stroke="#62B36E" stroke-width="2.2" fill="none"/></svg>
<div class="a" style="left:36px;top:961.5px;width:12px;height:3px;background:#AFB1B3;opacity:0.9"></div>
<div class="a" style="left:141px;top:961.5px;width:12px;height:3px;background:#AFB1B3;opacity:0.9"></div>
<svg class="a" style="left:326px;top:959px" width="10" height="5" viewBox="0 0 10 5"><path d="M0 5 L10 0 V5 Z" fill="#AFB1B3"/></svg>
<div class="a" style="left:413px;top:961px;width:12px;height:3px;background:#AFB1B3;opacity:0.9"></div>
<div class="a" style="left:520px;top:961px;width:12px;height:3px;background:#AFB1B3;opacity:0.9"></div>
<svg class="a" style="left:1784px;top:959px" width="16" height="5" viewBox="0 0 16 5"><circle cx="8" cy="9" r="6.5" stroke="#AFB1B3" stroke-width="2" fill="none"/></svg>

<svg class="a" style="left:1712px;top:71px" width="16" height="22" viewBox="0 0 16 22"><path d="M1 1 V17.5 L5 13.8 L8 20.5 L10.5 19.4 L7.6 12.8 L13 12.8 Z" fill="#fff" stroke="#000" stroke-width="1"/></svg>

</body></html>
